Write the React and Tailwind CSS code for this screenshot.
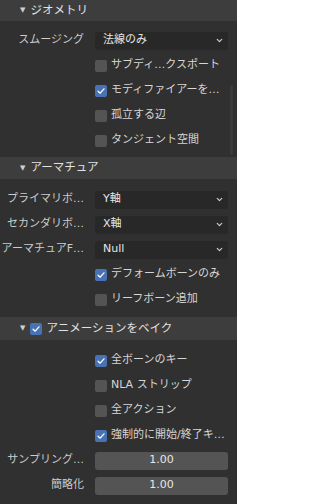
import React from 'react';

const font = { fontFamily: '"DejaVu Sans", "Noto Sans CJK JP", sans-serif' };

const Check = ({ on }) => (
  <span
    className={`flex h-[12px] w-[12px] shrink-0 items-center justify-center rounded-[2px] ${
      on ? 'bg-[#4772b3]' : 'bg-[#545454]'
    }`}
  >
    {on && (
      <svg viewBox="0 0 12 12" className="h-[10px] w-[10px]">
        <path d="M2.5 6.3 L5 8.6 L9.6 3.4" fill="none" stroke="#fff" strokeWidth="1.6" strokeLinecap="round" strokeLinejoin="round" />
      </svg>
    )}
  </span>
);

const Header = ({ title, h, check }) => (
  <div className={`flex items-center bg-[#3d3d3d] pl-[20px] text-[11.5px] text-[#e2e2e2] ${h}`}>
    <span className="mr-[5px] text-[7px] text-[#cfcfcf]">▼</span>
    {check && (
      <span className="mr-[4px]">
        <Check on />
      </span>
    )}
    <span>{title}</span>
  </div>
);

const Label = ({ children }) => (
  <div className="w-[85px] shrink-0 truncate pr-[1px] text-right text-[#cccccc]">{children}</div>
);

const Row = ({ children }) => <div className="flex h-[25px] items-center">{children}</div>;

const Select = ({ label, value }) => (
  <Row>
    <Label>{label}</Label>
    <div className="ml-[10px] flex h-[18px] w-[133px] items-center justify-between rounded-[3px] bg-[#282828] pl-[8px] pr-[4px] text-[#e6e6e6]">
      <span>{value}</span>
      <svg viewBox="0 0 10 10" className="h-[9px] w-[9px]">
        <path d="M2.5 3.8 L5 6.2 L7.5 3.8" fill="none" stroke="#cfcfcf" strokeWidth="1.3" strokeLinecap="round" strokeLinejoin="round" />
      </svg>
    </div>
  </Row>
);

const Box = ({ on, text }) => (
  <Row>
    <div className="ml-[95px] flex items-center gap-[4px] text-[#d6d6d6]">
      <Check on={on} />
      <span className="whitespace-nowrap">{text}</span>
    </div>
  </Row>
);

const Num = ({ label, value }) => (
  <Row>
    <Label>{label}</Label>
    <div className="ml-[10px] flex h-[18px] w-[133px] items-center justify-center rounded-[3px] bg-[#545454] text-[#e6e6e6]">
      {value}
    </div>
  </Row>
);

export default function App() {
  return (
    <div className="relative h-[504px] w-[237px] overflow-hidden bg-[#303030] text-[11px]" style={font}>
      <Header title="ジオメトリ" h="h-[21px]" />
      <div className="pt-[7px] pb-[4px]">
        <Select label="スムージング" value="法線のみ" />
        <Box text="サブディ…クスポート" />
        <Box on text="モディファイアーを…" />
        <Box text="孤立する辺" />
        <Box text="タンジェント空間" />
      </div>

      <Header title="アーマチュア" h="h-[22px]" />
      <div className="pt-[8px] pb-[5px]">
        <Select label="プライマリボ…" value="Y軸" />
        <Select label="セカンダリボ…" value="X軸" />
        <Select label="アーマチュアF…" value="Null" />
        <Box on text="デフォームボーンのみ" />
        <Box text="リーフボーン追加" />
      </div>

      <Header title="アニメーションをベイク" h="h-[23px]" check />
      <div className="pt-[8px]">
        <Box on text="全ボーンのキー" />
        <Box text="NLA ストリップ" />
        <Box text="全アクション" />
        <Box on text="強制的に開始/終了キ…" />
        <Num label="サンプリング…" value="1.00" />
        <Num label="簡略化" value="1.00" />
      </div>

      <div className="absolute right-[4px] top-[85px] h-[70px] w-[3px] rounded-full bg-[#3b3b3b]" />
    </div>
  );
}
